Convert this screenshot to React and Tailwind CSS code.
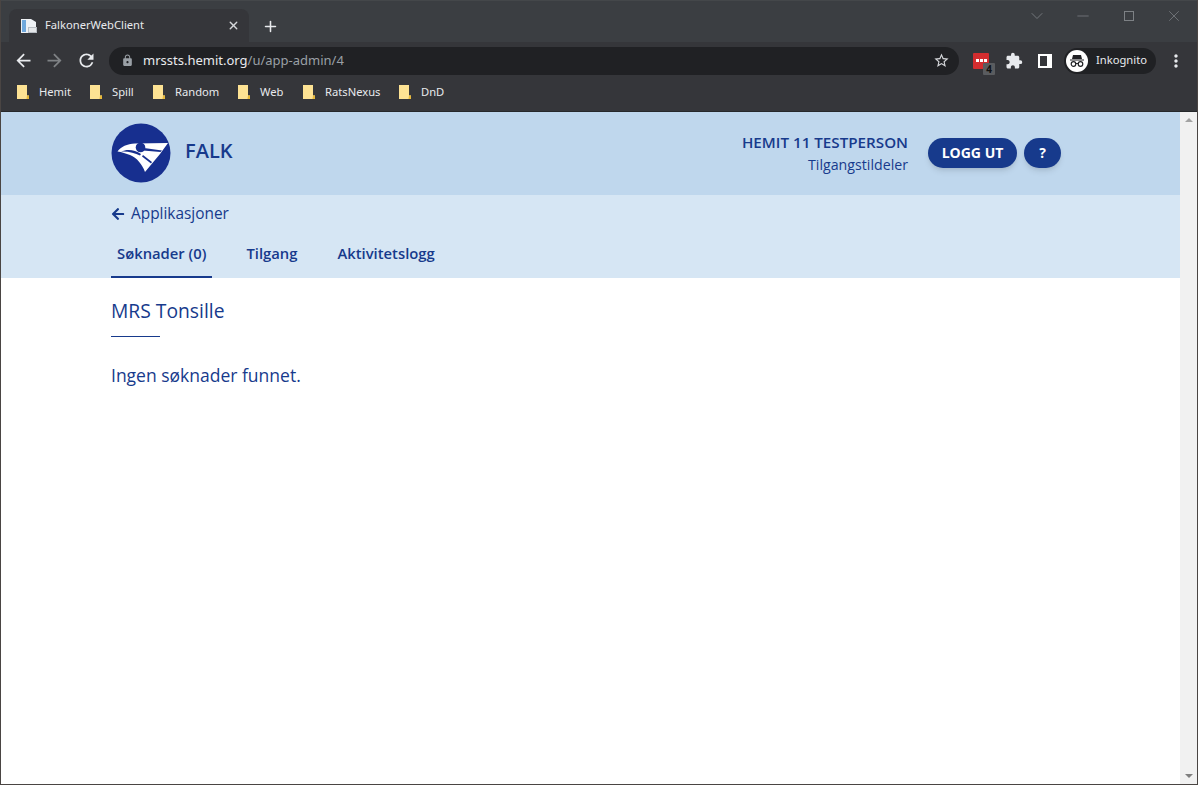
import { X, Plus, Minus, ChevronDown } from "lucide-react";
import { MdArrowBack, MdArrowForward, MdRefresh, MdLock, MdStarBorder, MdExtension, MdMoreVert } from "react-icons/md";
import { FaArrowLeft } from "react-icons/fa";

const bookmarks = [
  { label: "Hemit", width: "w-[73px]" },
  { label: "Spill", width: "w-[63px]" },
  { label: "Random", width: "w-[85px]" },
  { label: "Web", width: "w-[65px]" },
  { label: "RatsNexus", width: "w-[96px]" },
  { label: "DnD", width: "w-[60px]" },
];

function Folder() {
  return (
    <svg width="12" height="14" viewBox="0 0 12 14" className="mr-[10px] shrink-0">
      <path d="M0 0h10v10.500h2V14H0z" fill="#fde293" />
      <path d="M10 10.500h2V14H9.500z" fill="#e8b93a" />
    </svg>
  );
}

function Bird() {
  return (
    <svg width="60" height="60" viewBox="0 0 60 60" className="shrink-0 mb-[2px]">
      <circle cx="30" cy="30" r="29.500" fill="#172f8f" />
      <path d="M6.500 28.500C10 23.500 16 21 24 20.500L57 20 49 31 34 49C31 41 26 35 19 32 15 30.500 11 29 6.500 28.500z" fill="#fff" />
      <path d="M10 28.500C17 25.500 24 27 30 31L29 32.500C24 30 17 28 10 28.500z" fill="#172f8f" />
      <circle cx="29.500" cy="24.500" r="4.800" fill="#172f8f" />
      <path d="M33 25L51 27.500 49.500 29 32 27.500z" fill="#172f8f" />
      <path d="M32 32L41 39 40 40.500 31 33.500z" fill="#172f8f" />
    </svg>
  );
}

function Tab({ label, active, className }) {
  return (
    <div className={`h-[42px] px-[6px] flex items-center font-semibold text-[14.800px] text-[#173a8c] ${active ? "pb-[6px] border-b-2 border-[#173a8c]" : "pb-[8px]"} ${className}`}>
      {label}
    </div>
  );
}

export default function App() {
  return (
    <div className="w-[1198px] h-[785px] overflow-hidden flex flex-col bg-white border-x border-b border-[#4a4543] font-['Open_Sans',sans-serif]">
      {/* tab strip */}
      <div className="h-[42px] shrink-0 flex bg-[#3b3e42] border-t border-[#44474a] pl-[8px] font-['Noto_Sans',sans-serif]">
        <div className="mt-[8px] w-[240px] h-[33px] rounded-t-lg bg-[#35363a] flex items-center pl-[12px] pr-[9px]">
          <svg width="16" height="16" viewBox="0 0 16 16" className="shrink-0">
            <path d="M0 1h10l5 3v11H0z" fill="#eef1f5" />
            <path d="M1 2h4v12H1z" fill="#6fa8dc" />
            <path d="M7 9h9v6H7z" fill="#b9bec4" />
            <path d="M8 10h7v4H8z" fill="#e4e7ea" />
          </svg>
          <span className="ml-[8px] flex-1 text-[11.200px] text-[#e8eaed]">FalkonerWebClient</span>
          <X size={13} strokeWidth={2.5} color="#d5d7da" />
        </div>
        <Plus size={17} strokeWidth={2.2} color="#e8eaed" className="mt-[17px] ml-[13px]" />
        <div className="ml-auto flex items-start pt-[5px] pr-[14px] text-[#7d8185]">
          <ChevronDown size={20} strokeWidth={1} />
          <Minus size={18} strokeWidth={1} className="ml-[27px] mt-px" />
          <div className="ml-[32px] mt-[5px] w-[10px] h-[10px] border border-[#7d8185]" />
          <X size={18} strokeWidth={1} className="ml-[31px] mt-px" />
        </div>
      </div>

      {/* toolbar */}
      <div className="h-[37px] shrink-0 flex items-center bg-[#35363a] pl-[12px]">
        <MdArrowBack size={21} color="#e8eaed" />
        <MdArrowForward size={21} color="#7f8285" className="ml-[10px]" />
        <MdRefresh size={21} color="#e8eaed" className="ml-[11px]" />
        <div className="ml-[12px] w-[850px] h-[28px] rounded-full bg-[#202124] flex items-center pl-[12px] pr-[9px] font-['Noto_Sans',sans-serif] text-[13px]">
          <MdLock size={13} color="#9aa0a6" />
          <span className="ml-[9px] text-[#e8eaed]">mrssts.hemit.org</span>
          <span className="text-[#9aa0a6]">/u/app-admin/4</span>
          <MdStarBorder size={17} color="#d5d7da" className="ml-auto" />
        </div>
        <div className="relative ml-[14px] w-[16px] h-[16px] rounded-[1px] bg-[#d32d2f] flex items-center justify-center gap-[1px]">
          <i className="w-[3px] h-[3px] bg-white" />
          <i className="w-[3px] h-[3px] bg-white" />
          <i className="w-[3px] h-[3px] bg-white" />
          <span className="absolute left-[10px] top-[10px] w-[12px] h-[12px] rounded-[1px] bg-[#5a5c5f] text-[10px] leading-[13px] text-center text-[#111] font-bold">4</span>
        </div>
        <MdExtension size={18} color="#e8eaed" className="ml-[16px]" />
        <div className="ml-[15px] w-[14px] h-[14px] border-2 border-white border-r-[5px]" />
        <div className="ml-[12px] w-[92px] h-[26px] rounded-full bg-[#202124] flex items-center pl-[2px] font-['Noto_Sans',sans-serif] text-[11.200px] text-[#e8eaed]">
          <div className="w-[22px] h-[22px] rounded-full bg-white flex items-center justify-center">
            <svg width="16" height="14" viewBox="0 0 16 14">
              <path d="M4 1h8l1 4H3zM1 5.500h14v1H1z" fill="#202124" />
              <circle cx="4.500" cy="10" r="2.300" fill="none" stroke="#202124" strokeWidth="1.200" />
              <circle cx="11.500" cy="10" r="2.300" fill="none" stroke="#202124" strokeWidth="1.200" />
              <path d="M6.500 9.500h3" stroke="#202124" />
            </svg>
          </div>
          <span className="ml-[8px]">Inkognito</span>
        </div>
        <MdMoreVert size={20} color="#e8eaed" className="ml-[10px]" />
      </div>

      {/* bookmarks */}
      <div className="h-[33px] shrink-0 flex items-center bg-[#35363a] border-b border-[#26282b] pl-[16px] pb-[6px] font-['Noto_Sans',sans-serif] text-[11.200px] text-[#e8eaed]">
        {bookmarks.map((b) => (
          <div key={b.label} className={`flex items-center ${b.width}`}>
            <Folder />
            <span>{b.label}</span>
          </div>
        ))}
      </div>

      {/* page */}
      <div className="flex-1 flex min-h-0">
        <div className="flex-1 min-w-0 flex flex-col">
          <header className="h-[83px] shrink-0 bg-[#bfd7ed] flex items-center pl-[110px] pr-[119px]">
            <Bird />
            <span className="ml-[14px] mb-[5px] text-xl font-semibold text-[#173a8c]">FALK</span>
            <div className="ml-auto pt-[1px] text-right text-[#173a8c]">
              <div className="font-semibold text-[15.200px] leading-[20px]">HEMIT 11 TESTPERSON</div>
              <div className="mt-[1px] text-[14.200px] leading-[24px]">Tilgangstildeler</div>
            </div>
            <button className="ml-[20px] mb-px w-[89px] h-[30px] rounded-full bg-[#173a8c] text-white font-bold text-sm shadow-md">LOGG UT</button>
            <button className="ml-[7px] mb-px w-[37px] h-[30px] rounded-full bg-[#173a8c] text-white font-bold text-sm shadow-md">?</button>
          </header>

          <div className="h-[83px] shrink-0 bg-[#d6e6f4] pl-[110px] flex flex-col">
            <div className="h-[41px] pb-[3px] flex items-center text-[#173a8c] text-[15.400px]">
              <FaArrowLeft size={14} />
              <span className="ml-[6px]">Applikasjoner</span>
            </div>
            <div className="flex">
              <Tab label="Søknader (0)" active />
              <Tab label="Tilgang" className="ml-[28px]" />
              <Tab label="Aktivitetslogg" className="ml-[28px]" />
            </div>
          </div>

          <main className="pl-[110px] pt-[19px] text-[#173a8c]">
            <h1 className="text-[19.300px] leading-[28px]">MRS Tonsille</h1>
            <div className="mt-[11px] w-[49px] h-px bg-[#173a8c]" />
            <p className="mt-[26px] text-[17.500px] leading-[24px]">Ingen søknader funnet.</p>
          </main>
        </div>

        {/* scrollbar */}
        <div className="w-[17px] shrink-0 bg-[#f1f1f1] flex flex-col justify-between items-center py-[6px]">
          <div className="w-0 h-0 border-x-[4px] border-x-transparent border-b-[4px] border-b-[#a3a3a3]" />
          <div className="w-0 h-0 border-x-[4px] border-x-transparent border-t-[4px] border-t-[#7f7f7f]" />
        </div>
      </div>
    </div>
  );
}
